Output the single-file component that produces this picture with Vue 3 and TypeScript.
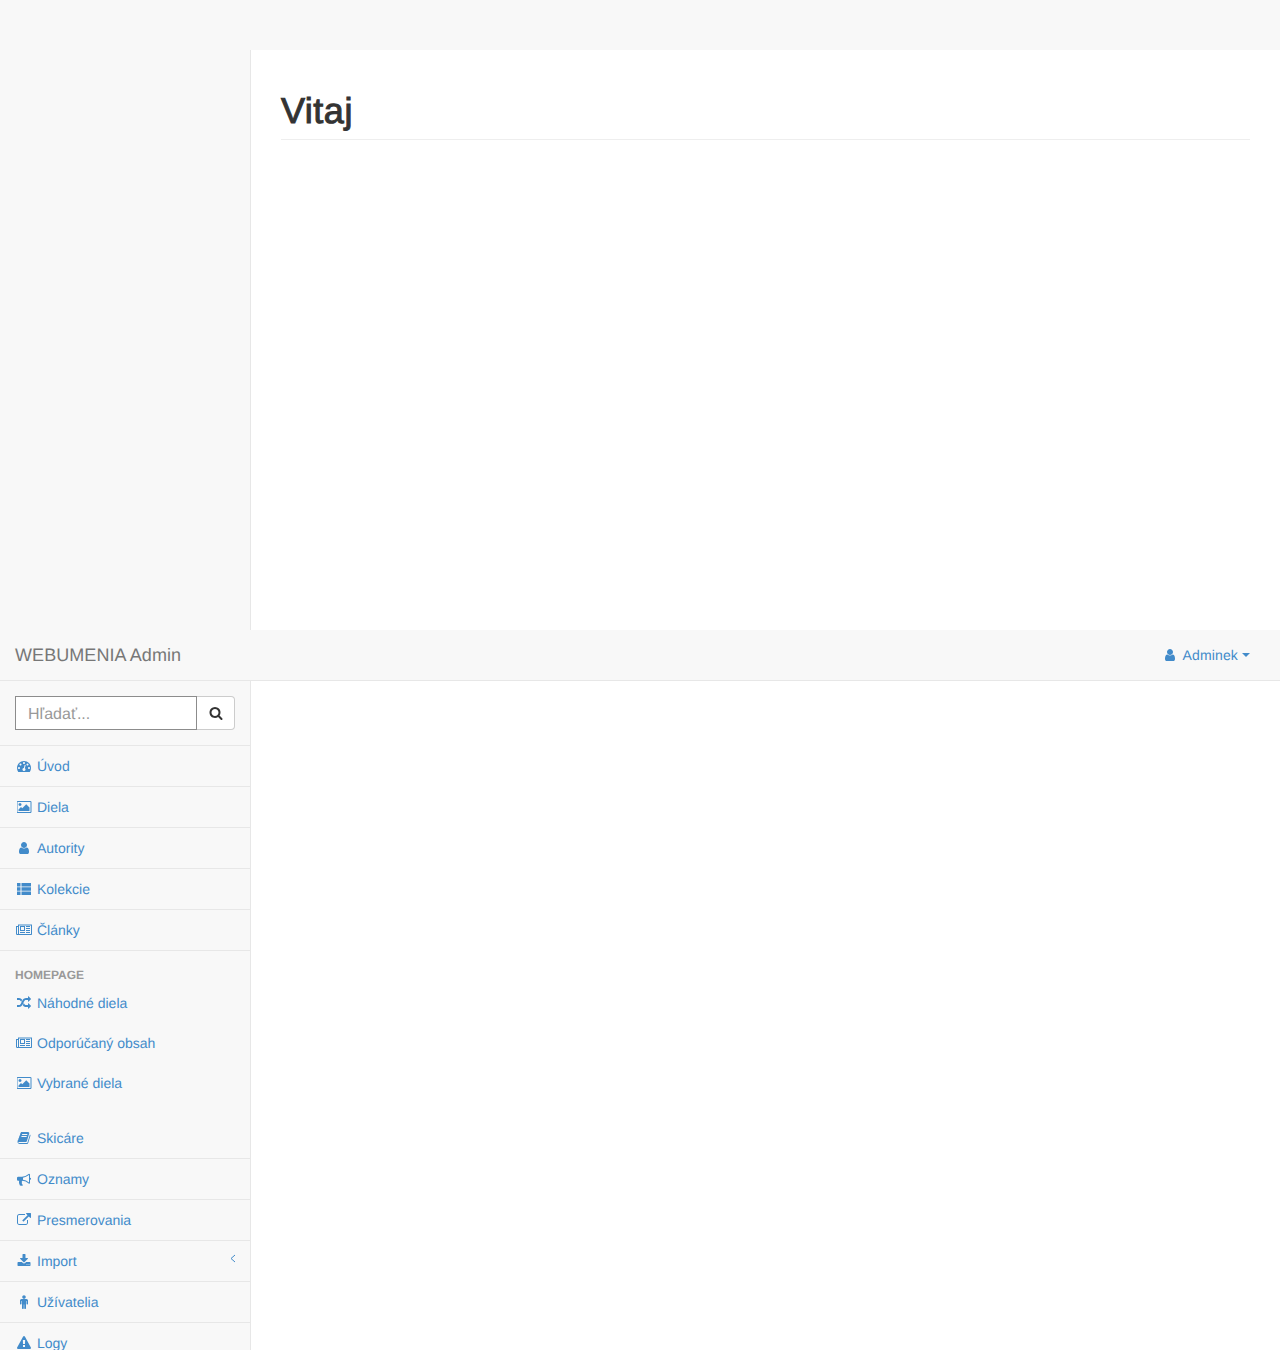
<script setup lang="ts">
interface Icon { w: number; d: string; rule?: 'evenodd' | 'nonzero' }
const icons: Record<string, Icon> = {
  dashboard: { w: 1792, d: 'M384 1152q0-53-37.5-90.5t-90.5-37.5-90.5 37.5-37.5 90.5 37.5 90.5 90.5 37.5 90.5-37.5 37.5-90.5zm192-448q0-53-37.5-90.5t-90.5-37.5-90.5 37.5-37.5 90.5 37.5 90.5 90.5 37.5 90.5-37.5 37.5-90.5zm428 481l101-382q6-26-7.5-48.5t-38.5-29.5-48 6.5-30 39.5l-101 382q-60 5-107 43.5t-63 98.5q-20 77 20 146t117 89 146-20 89-117q16-60-6-117t-72-91zm660-33q0-53-37.5-90.5t-90.5-37.5-90.5 37.5-37.5 90.5 37.5 90.5 90.5 37.5 90.5-37.5 37.5-90.5zm-640-640q0-53-37.5-90.5t-90.5-37.5-90.5 37.5-37.5 90.5 37.5 90.5 90.5 37.5 90.5-37.5 37.5-90.5zm448 192q0-53-37.5-90.5t-90.5-37.5-90.5 37.5-37.5 90.5 37.5 90.5 90.5 37.5 90.5-37.5 37.5-90.5zm320 448q0 261-141 483-19 29-54 29h-1402q-35 0-54-29-141-221-141-483 0-182 71-348t191-286 286-191 348-71 348 71 286 191 191 286 71 348z' },
  picture: { w: 1920, d: 'M576 576q0 80-56 136t-136 56-136-56-56-136 56-136 136-56 136 56 56 136zm1024 384v448h-1408v-192l320-320 160 160 512-512zm96-704h-1600q-13 0-22.5 9.5t-9.5 22.5v1216q0 13 9.5 22.5t22.5 9.5h1600q13 0 22.5-9.5t9.5-22.5v-1216q0-13-9.5-22.5t-22.5-9.5zm160 32v1216q0 66-47 113t-113 47h-1600q-66 0-113-47t-47-113v-1216q0-66 47-113t113-47h1600q66 0 113 47t47 113z' },
  user: { w: 1792, d: 'M1536 1399q0 109-62.5 187t-150.5 78h-854q-88 0-150.5-78t-62.5-187q0-85 8.5-160.5t31.5-152 58.5-131 94-89 134.5-34.5q131 128 313 128t313-128q76 0 134.5 34.5t94 89 58.5 131 31.5 152 8.5 160.5zm-256-887q0 159-112.5 271.5t-271.5 112.5-271.5-112.5-112.5-271.5 112.5-271.5 271.5-112.5 271.5 112.5 112.5 271.5z' },
  list: { w: 1792, d: 'M0 128h448v448H0zM576 128h1216v448H576zM0 672h448v448H0zM576 672h1216v448H576zM0 1216h448v448H0zM576 1216h1216v448H576z' },
  news: { w: 2048, rule: 'evenodd', d: 'M256 192H2048V1440q0 96-96 96H160Q0 1536 0 1376V384H256ZM384 320H1920V1376q0 32-32 32H352Q384 1392 384 1376ZM128 512H256V1376q0 32-64 32-64 0-64-32ZM640 512V896H1024V512ZM512 384H1152V1024H512ZM512 1152H1152V1280H512ZM1280 384H1792V512H1280ZM1280 640H1792V768H1280ZM1280 896H1792V1024H1280ZM1280 1152H1792V1280H1280Z' },
  random: { w: 1792, d: 'M666 481q-60 92-137 273-22-45-37-72.5t-40.5-63.5-51-56.5-63-35-81.5-14.5h-224q-14 0-23-9t-9-23v-192q0-14 9-23t23-9h224q250 0 410 225zm1126 799q0 14-9 23l-320 320q-9 9-23 9-13 0-22.5-9.5t-9.5-22.5v-192q-32 0-85 .5t-81 1-73-1-71-5-64-10.5-63-18.5-58-28.5-59-40-55-53.5-56-69.5q59-93 136-273 22 45 37 72.5t40.5 63.5 51 56.5 63 35 81.5 14.5h256v-192q0-14 9-23t23-9q12 0 24 10l319 319q9 9 9 23zm0-896q0 14-9 23l-320 320q-9 9-23 9-13 0-22.5-9.5t-9.5-22.5v-192h-256q-48 0-87 15t-69 45-51 61.5-45 77.5q-32 62-78 171-29 66-49.5 111t-54 105-64 100-74 83-90 68.5-106.5 42-128 16.5h-224q-14 0-23-9t-9-23v-192q0-14 9-23t23-9h224q48 0 87-15t69-45 51-61.5 45-77.5q32-62 78-171 29-66 49.5-111t54-105 64-100 74-83 90-68.5 106.5-42 128-16.5h256v-192q0-14 9-23t23-9q12 0 24 10l319 319q9 9 9 23z' },
  book: { w: 1792, d: 'M1703 478q40 57 18 129l-275 906q-19 64-76.5 107.5t-122.5 43.5h-923q-77 0-148.5-53.5t-99.5-131.5q-24-67-2-127 0-4 3-27t4-37q1-8-3-21.5t-3-19.5q2-11 8-21t16.5-23.5 16.5-23.5q23-38 45-91.5t30-91.5q3-10 .5-30t-.5-28q3-11 17-28t17-23q21-36 42-92t25-90q1-9-2.5-32t.5-28q4-13 22-30.5t22-22.5q19-26 42.5-84.5t27.5-96.5q1-8-3-25.5t-2-26.5q2-8 9-18t18-23 17-21q8-12 16.5-30.5t15-35 16-36 19.5-32 26.5-23.5 36-11.5 47.5 5.5l-1 3q38-9 51-9h761q74 0 114 56t18 130l-274 906q-36 119-71.5 153.5t-128.5 34.5h-869q-27 0-38 15-11 16-1 43 24 70 144 70h923q29 0 56-15.5t35-41.5l300-987q7-22 5-57 38 15 59 43zm-1064 2q-4 13 2 22.5t20 9.5h608q13 0 25.5-9.5t16.5-22.5l21-64q4-13-2-22.5t-20-9.5h-608q-13 0-25.5 9.5t-16.5 22.5zm-83 256q-4 13 2 22.5t20 9.5h608q13 0 25.5-9.5t16.5-22.5l21-64q4-13-2-22.5t-20-9.5h-608q-13 0-25.5 9.5t-16.5 22.5z' },
  bullhorn: { w: 1792, d: 'M1664 736q53 0 90.5 37.5t37.5 90.5-37.5 90.5-90.5 37.5v384q0 52-38 90t-90 38q-417-347-812-380-58 19-91 66t-31 100.5 40 92.5q-20 33-23 65.5t6 58 33.5 55 48 50 61.5 50.5q-29 58-111.5 83t-168.5 11.5-132-55.5q-7-23-29.5-87.5t-32-94.5-23-89-15-101 3.5-98.5 22-110.5h-122q-66 0-113-47t-47-113v-192q0-66 47-113t113-47h480q435 0 896-384 52 0 90 38t38 90v384zm-128 604v-954q-394 302-768 343v270q377 42 768 341z' },
  external: { w: 1792, d: 'M1408 928v320q0 119-84.5 203.5t-203.5 84.5h-832q-119 0-203.5-84.5t-84.5-203.5v-832q0-119 84.5-203.5t203.5-84.5h704q14 0 23 9t9 23v64q0 14-9 23t-23 9h-704q-66 0-113 47t-47 113v832q0 66 47 113t113 47h832q66 0 113-47t47-113v-320q0-14 9-23t23-9h64q14 0 23 9t9 23zm384-864v512q0 26-19 45t-45 19-45-19l-176-176-652 652q-10 10-23 10t-23-10l-114-114q-10-10-10-23t10-23l652-652-176-176q-19-19-19-45t19-45 45-19h512q26 0 45 19t19 45z' },
  download: { w: 1792, d: 'M1344 1344q0-26-19-45t-45-19-45 19-19 45 19 45 45 19 45-19 19-45zm256 0q0-26-19-45t-45-19-45 19-19 45 19 45 45 19 45-19 19-45zm128-224v320q0 40-28 68t-68 28h-1472q-40 0-68-28t-28-68v-320q0-40 28-68t68-28h465l135 136q58 56 136 56t136-56l136-136h464q40 0 68 28t28 68zm-325-569q17 41-14 70l-448 448q-18 19-45 19t-45-19l-448-448q-31-29-14-70 17-39 59-39h256v-448q0-26 19-45t45-19h256q26 0 45 19t19 45v448h256q42 0 59 39z' },
  male: { w: 1024, d: 'M1024 704v416q0 40-28 68t-68 28-68-28-28-68v-352h-64v912q0 46-33 79t-79 33-79-33-33-79v-464h-64v464q0 46-33 79t-79 33-79-33-33-79v-912h-64v352q0 40-28 68t-68 28-68-28-28-68v-416q0-80 56-136t136-56h640q80 0 136 56t56 136zM736 256q0 93-65.5 158.5t-158.5 65.5-158.5-65.5-65.5-158.5 65.5-158.5 158.5-65.5 158.5 65.5 65.5 158.5z' },
  warning: { w: 1792, d: 'M1024 1375v-190q0-14-9.5-23.5t-22.5-9.5h-192q-13 0-22.5 9.5t-9.5 23.5v190q0 14 9.5 23.5t22.5 9.5h192q13 0 22.5-9.5t9.5-23.5zm-2-374l18-459q0-12-10-19-13-11-24-11h-220q-11 0-24 11-10 7-10 21l17 457q0 10 10 16.5t24 6.5h185q14 0 23.5-6.5t10.5-16.5zm-14-934l768 1408q35 63-2 126-17 29-46.5 46t-63.5 17h-1536q-34 0-63.5-17t-46.5-46q-37-63-2-126l768-1408q17-31 47-49t65-18 65 18 47 49z' },
  search: { w: 1792, d: 'M1216 832q0-185-131.5-316.5t-316.5-131.5-316.5 131.5-131.5 316.5 131.5 316.5 316.5 131.5 316.5-131.5 131.5-316.5zm512 832q0 52-38 90t-90 38q-54 0-90-38l-343-342q-179 124-399 124-143 0-273.5-55.5t-225-150-150-225-55.5-273.5 55.5-273.5 150-225 225-150 273.5-55.5 273.5 55.5 225 150 150 225 55.5 273.5q0 220-124 399l343 343q37 37 37 90z' },
}
const vb = (k: string) => `0 0 ${icons[k].w} 1792`
const iw = (k: string) => icons[k].w / 128

const mainTop = [
  { icon: 'dashboard', label: 'Úvod' },
  { icon: 'picture', label: 'Diela' },
  { icon: 'user', label: 'Autority' },
  { icon: 'list', label: 'Kolekcie' },
  { icon: 'news', label: 'Články' },
]
const homepage = [
  { icon: 'random', label: 'Náhodné diela' },
  { icon: 'news', label: 'Odporúčaný obsah' },
  { icon: 'picture', label: 'Vybrané diela' },
]
const mainBottom = [
  { icon: 'book', label: 'Skicáre', arrow: false },
  { icon: 'bullhorn', label: 'Oznamy', arrow: false },
  { icon: 'external', label: 'Presmerovania', arrow: false },
  { icon: 'download', label: 'Import', arrow: true },
  { icon: 'male', label: 'Užívatelia', arrow: false },
  { icon: 'warning', label: 'Logy', arrow: false },
]
</script>

<template>
  <div class="page">
    <section class="frame">
      <aside class="frame-side"></aside>
      <main class="frame-main">
        <h1 class="page-header">Vitaj</h1>
      </main>
    </section>

    <header class="navbar">
      <a class="brand" href="#">WEBUMENIA Admin</a>
      <a class="account" href="#">
        <span class="ico"><svg :viewBox="vb('user')" :width="iw('user')" height="14"><path :d="icons.user.d" /></svg></span>
        <span class="account-name">Adminek</span>
        <span class="caret"></span>
      </a>
    </header>

    <section class="shell">
      <nav class="sidebar">
        <form class="search" @submit.prevent>
          <input class="search-input" type="text" placeholder="Hľadať..." />
          <button class="search-btn" type="button" aria-label="Hľadať">
            <svg :viewBox="vb('search')" :width="iw('search')" height="14"><path :d="icons.search.d" /></svg>
          </button>
        </form>

        <ul class="menu">
          <li v-for="item in mainTop" :key="item.label" class="row">
            <a href="#" class="link">
              <span class="ico"><svg :viewBox="vb(item.icon)" :width="iw(item.icon)" height="14"><path :d="icons[item.icon].d" :fill-rule="icons[item.icon].rule" /></svg></span>
              <span>{{ item.label }}</span>
            </a>
          </li>
          <li class="group">
            <div class="group-title">HOMEPAGE</div>
            <a v-for="item in homepage" :key="item.label" href="#" class="link">
              <span class="ico"><svg :viewBox="vb(item.icon)" :width="iw(item.icon)" height="14"><path :d="icons[item.icon].d" :fill-rule="icons[item.icon].rule" /></svg></span>
              <span>{{ item.label }}</span>
            </a>
          </li>
          <li v-for="item in mainBottom" :key="item.label" class="row">
            <a href="#" class="link">
              <span class="ico"><svg :viewBox="vb(item.icon)" :width="iw(item.icon)" height="14"><path :d="icons[item.icon].d" :fill-rule="icons[item.icon].rule" /></svg></span>
              <span>{{ item.label }}</span>
              <svg v-if="item.arrow" class="arrow" viewBox="0 0 6 10" width="6" height="10"><polyline points="5,1 1,4.5 5,8" /></svg>
            </a>
          </li>
        </ul>
      </nav>
      <div class="shell-main"></div>
    </section>
  </div>
</template>

<style>
html, body { background: #fff; }
</style>

<style scoped>
.page {
  height: 1350px;
  overflow: hidden;
  font-family: "Liberation Sans", Arial, sans-serif;
  font-size: 14px;
  line-height: 20px;
  color: #333;
  text-rendering: geometricPrecision;
}
a { color: #428bca; text-decoration: none; }
svg { display: block; fill: currentColor; }

.frame {
  display: flex;
  height: 630px;
  padding-top: 50px;
  box-sizing: border-box;
  background: #f8f8f8;
}
.frame-side { width: 250px; flex: none; }
.frame-main {
  flex: 1;
  padding: 0 30px;
  background: #fff;
  border-left: 1px solid #e7e7e7;
}
.page-header {
  margin: 40px 0 20px;
  padding: 1px 0 8px;
  border-bottom: 1px solid #eee;
  font-size: 36px;
  font-weight: 400;
  line-height: 1.1;
  letter-spacing: 0.5px;
  -webkit-text-stroke: 1px #333;
  color: #333;
}

.navbar {
  display: flex;
  align-items: center;
  justify-content: space-between;
  height: 51px;
  box-sizing: border-box;
  padding: 0 30px 0 15px;
  background: #f8f8f8;
  border-bottom: 1px solid #e7e7e7;
}
.brand { font-size: 18px; letter-spacing: 0.07px; color: #777; }
.account { display: flex; align-items: center; gap: 4px; }
.account-name { letter-spacing: 0.14px; }
.caret {
  width: 0;
  height: 0;
  border-top: 4px solid currentColor;
  border-left: 4px solid transparent;
  border-right: 4px solid transparent;
}

.shell { display: flex; }
.sidebar {
  width: 250px;
  flex: none;
  background: #f8f8f8;
  border-right: 1px solid #e7e7e7;
}
.shell-main { flex: 1; background: #fff; }

.search {
  display: flex;
  padding: 15px;
  border-bottom: 1px solid #e7e7e7;
}
.search-input {
  width: 182px;
  height: 34px;
  box-sizing: border-box;
  padding: 8px 12px 4px;
  border: 1px solid #8c8c8c;
  border-radius: 0;
  background: #fff;
  color: #555;
  font: 16px/20px "Liberation Sans", Arial, sans-serif;
  text-rendering: geometricPrecision;
  outline: none;
}
.search-input::placeholder { color: #999; opacity: 1; }
.search-btn {
  display: flex;
  align-items: center;
  justify-content: center;
  width: 38px;
  height: 34px;
  box-sizing: border-box;
  padding: 0;
  border: 1px solid #ccc;
  border-left: 0;
  border-radius: 0 4px 4px 0;
  background: #fff;
  color: #333;
}

.menu { list-style: none; margin: 0; padding: 0; }
.row { border-bottom: 1px solid #e7e7e7; }
.link {
  display: flex;
  align-items: center;
  gap: 4px;
  height: 40px;
  padding: 0 15px;
}
.ico {
  display: flex;
  justify-content: center;
  width: 18px;
  flex: none;
}
.arrow {
  margin-left: auto;
  margin-right: -1px;
  margin-top: -5px;
  fill: none;
  stroke: currentColor;
  stroke-width: 1;
}
.group { padding-bottom: 15px; }
.group-title {
  padding: 16px 15px 0;
  font-size: 12px;
  font-weight: 700;
  line-height: 16px;
  color: #999;
}
</style>
